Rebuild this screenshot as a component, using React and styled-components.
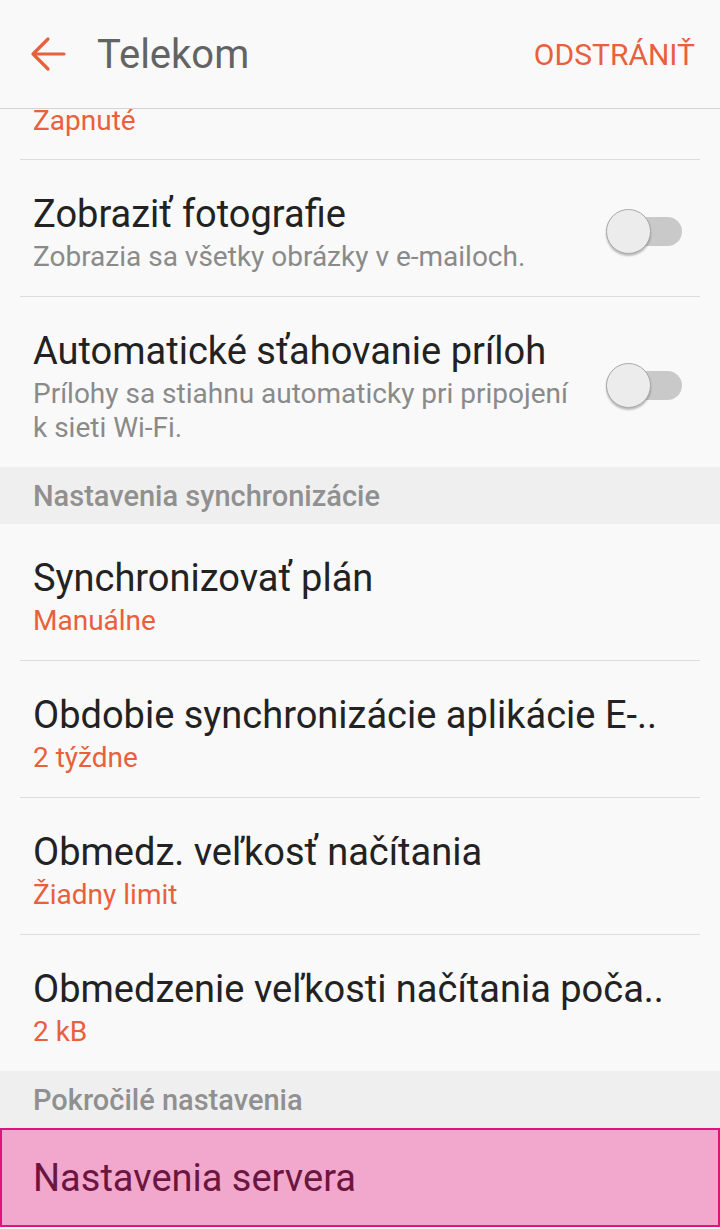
import React from 'react';
import styled, { createGlobalStyle } from 'styled-components';

const Global = createGlobalStyle`
  html, body {
    margin: 0;
    padding: 0;
    background: #f9f9f9;
    font-family: Roboto, "Noto Sans", sans-serif;
  }
`;

const Page = styled.div`
  width: 720px;
  height: 1229px;
  overflow: hidden;
  background: #f9f9f9;
`;

const TopBar = styled.header`
  height: 108px;
  display: flex;
  align-items: center;
  padding: 0 25px 0 30px;
  border-bottom: 1px solid #d4d4d4;
  box-sizing: content-box;
`;

const BackButton = styled.button`
  background: none;
  border: 0;
  padding: 0;
  width: 36px;
  height: 36px;
  display: flex;
  align-items: center;
  justify-content: center;
`;

const Title = styled.h1`
  margin: 0 0 0 31px;
  font-size: 40px;
  font-weight: 400;
  color: #636363;
  flex: 1;
`;

const Action = styled.span`
  font-size: 30px;
  color: #e8603c;
`;

const Item = styled.div`
  display: flex;
  align-items: center;
  margin: 0 20px;
  padding: ${(p) => (p.$cut ? '0 18px 21px 13px' : '28px 18px 22px 13px')};
  border-bottom: ${(p) => (p.$last ? 'none' : '1px solid #dcdcdc')};
`;

const Texts = styled.div`
  flex: 1;
  min-width: 0;
`;

const Label = styled.div`
  font-size: 38px;
  line-height: 52px;
  color: #222;
  white-space: nowrap;
`;

const Sub = styled.div`
  font-size: 28px;
  line-height: 34px;
  color: ${(p) => (p.$accent ? '#e8603c' : '#8a8a8a')};
  max-width: 545px;
`;

const Cut = styled.div`
  height: 29px;
  overflow: hidden;
  display: flex;
  align-items: flex-end;
`;

const Section = styled.div`
  background: #efefef;
  height: 57px;
  display: flex;
  align-items: center;
  padding-left: 33px;
  font-size: 29px;
  font-weight: 500;
  color: #909090;
`;

const Track = styled.div`
  position: relative;
  width: 75px;
  height: 29px;
  border-radius: 15px;
  background: #c9c9c9;
  margin-left: 20px;
  flex-shrink: 0;
`;

const Thumb = styled.div`
  position: absolute;
  left: -1px;
  top: -8px;
  width: 43px;
  height: 43px;
  border-radius: 50%;
  background: #ececec;
  border: 1px solid #a9a9a9;
  box-shadow: 0 2px 2px rgba(0, 0, 0, 0.25);
`;

const Highlight = styled.div`
  height: 99px;
  box-sizing: border-box;
  border: 2px solid #e2137c;
  background: #f1a8cc;
  display: flex;
  align-items: center;
  padding-left: 31px;
  font-size: 38px;
  color: #6b1540;
`;

function Toggle() {
  return (
    <Track>
      <Thumb />
    </Track>
  );
}

const syncRows = [
  ['Synchronizovať plán', 'Manuálne'],
  ['Obdobie synchronizácie aplikácie E-..', '2 týždne'],
  ['Obmedz. veľkosť načítania', 'Žiadny limit'],
  ['Obmedzenie veľkosti načítania poča..', '2 kB'],
];

export default function App() {
  return (
    <Page>
      <Global />
      <TopBar>
        <BackButton aria-label="Späť">
          <svg width="36" height="36" viewBox="0 0 36 36" fill="none">
            <path
              d="M3 18 H34 M18 3 L3 18 L18 33"
              stroke="#e8603c"
              strokeWidth="3.2"
              strokeLinecap="round"
              strokeLinejoin="round"
            />
          </svg>
        </BackButton>
        <Title>Telekom</Title>
        <Action>ODSTRÁNIŤ</Action>
      </TopBar>

      <Item $cut>
        <Cut>
          <Sub $accent>Zapnuté</Sub>
        </Cut>
      </Item>
      <Item>
        <Texts>
          <Label>Zobraziť fotografie</Label>
          <Sub>Zobrazia sa všetky obrázky v e-mailoch.</Sub>
        </Texts>
        <Toggle />
      </Item>
      <Item $last>
        <Texts>
          <Label>Automatické sťahovanie príloh</Label>
          <Sub>Prílohy sa stiahnu automaticky pri pripojení k sieti Wi-Fi.</Sub>
        </Texts>
        <Toggle />
      </Item>

      <Section>Nastavenia synchronizácie</Section>
      {syncRows.map(([label, value], i) => (
        <Item key={label} $last={i === syncRows.length - 1}>
          <Texts>
            <Label>{label}</Label>
            <Sub $accent>{value}</Sub>
          </Texts>
        </Item>
      ))}

      <Section>Pokročilé nastavenia</Section>
      <Highlight>Nastavenia servera</Highlight>
    </Page>
  );
}
